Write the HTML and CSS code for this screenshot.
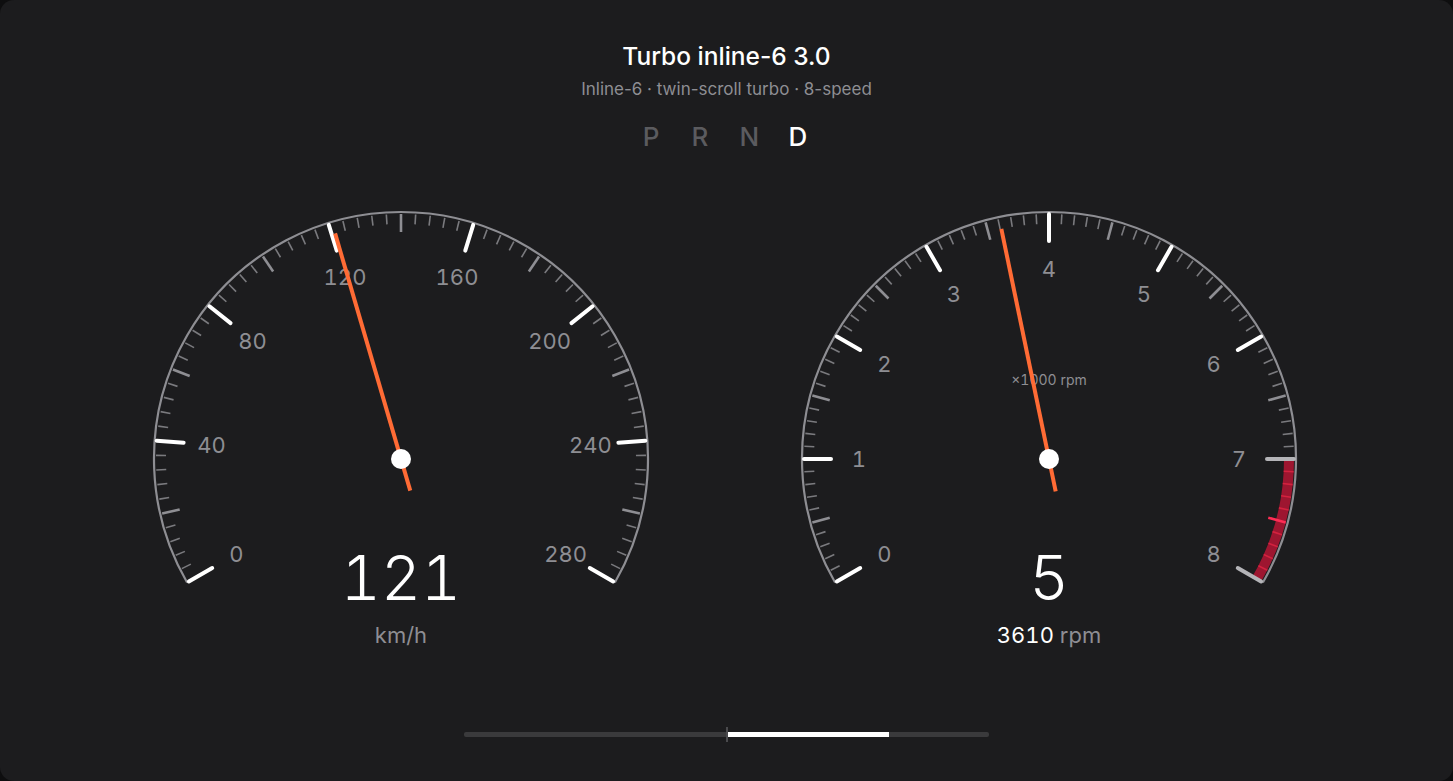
FILE: index.html
```html
<!DOCTYPE html>
<html lang="en">
<head>
<meta charset="UTF-8" />
<meta name="viewport" content="width=device-width, initial-scale=1" />
<title>Turbo inline-6 3.0</title>
<link rel="stylesheet" href="styles.css">
</head>
<body>

<div class="dash">
  <header class="head">
    <h1>Turbo inline-6 3.0</h1>
    <p class="spec">Inline-6 · twin-scroll turbo · 8-speed</p>
    <div class="prnd">
      <span>P</span><span>R</span><span>N</span><span class="on">D</span>
    </div>
  </header>

  <div class="gauges">
    <div class="gauge">
      <svg id="speedo" class="dial" width="520" height="400" viewBox="0 0 520 400"></svg>
      <div class="readout">
        <div class="big">121</div>
        <div class="unit">km/h</div>
      </div>
    </div>
    <div class="gauge">
      <svg id="tacho" class="dial" width="520" height="400" viewBox="0 0 520 400"></svg>
      <div class="readout">
        <div class="big">5</div>
        <div class="unit"><span class="val">3610</span> rpm</div>
      </div>
    </div>
  </div>

  <div class="pedal">
    <div class="track">
      <div class="fill" style="left: 50%; width: 31%"></div>
      <span class="mark"></span>
    </div>
  </div>
</div>

<script>
(() => {
  const NS = 'http://www.w3.org/2000/svg';
  const CX = 260, CY = 260, R = 247;
  const START = -120, SWEEP = 240;

  // angle in degrees, clockwise from 12 o'clock
  function pt(r, deg) {
    const a = (deg - 90) * Math.PI / 180;
    return [CX + r * Math.cos(a), CY + r * Math.sin(a)];
  }

  function el(svg, tag, attrs, text) {
    const e = document.createElementNS(NS, tag);
    for (const k in attrs) e.setAttribute(k, attrs[k]);
    if (text != null) e.textContent = text;
    svg.appendChild(e);
    return e;
  }

  function arc(r, a0, a1) {
    const [x0, y0] = pt(r, a0);
    const [x1, y1] = pt(r, a1);
    const big = (a1 - a0) > 180 ? 1 : 0;
    return `M${x0} ${y0} A${r} ${r} 0 ${big} 1 ${x1} ${y1}`;
  }

  function line(svg, r0, r1, deg, cls) {
    const [x0, y0] = pt(r0, deg);
    const [x1, y1] = pt(r1, deg);
    el(svg, 'line', { x1: x0, y1: y0, x2: x1, y2: y1, class: cls });
  }

  function dial(svg, opt) {
    const ang = v => START + (v / opt.max) * SWEEP;

    el(svg, 'path', { d: arc(R, START, START + SWEEP), class: 'rim' });

    if (opt.red != null) {
      el(svg, 'path', { d: arc(240, ang(opt.red), ang(opt.max)), class: 'redband' });
    }

    for (let i = 0; i <= opt.steps; i++) {
      const v = i * opt.max / opt.steps;
      const deg = ang(v);
      const inRed = opt.red != null && v >= opt.red - 1e-9;
      if (i % opt.major === 0) {
        line(svg, 245, 218, deg, inRed ? 'tick major dim' : 'tick major');
        const [lx, ly] = pt(190, deg);
        el(svg, 'text', { x: lx, y: ly, class: 'num' }, opt.label(v));
      } else if (i % opt.medium === 0) {
        line(svg, 245, 227, deg, inRed ? 'tick mid red' : 'tick mid');
      } else {
        line(svg, 245, 235, deg, inRed ? 'tick minor red' : 'tick minor');
      }
    }

    if (opt.caption) {
      el(svg, 'text', { x: CX, y: CY - 80, class: 'caption' }, opt.caption);
    }

    line(svg, -33, 235, ang(opt.value), 'needle');
    el(svg, 'circle', { cx: CX, cy: CY, r: 10, class: 'hub' });
  }

  dial(document.getElementById('speedo'), {
    max: 280, steps: 70, major: 10, medium: 5,
    value: 121, label: v => String(Math.round(v))
  });

  dial(document.getElementById('tacho'), {
    max: 8, steps: 80, major: 10, medium: 5,
    value: 3.61, red: 7, caption: '×1000 rpm',
    label: v => String(Math.round(v))
  });
})();
</script>

</body>
</html>
```

FILE: styles.css
```css
* {
  margin: 0; padding: 0; box-sizing: border-box;
}
html, body {
  height: 100%;
  background: #0e0e0f;
  font-family: 'Inter', 'Noto Sans', sans-serif;
  color: #fff;
  overflow: hidden;
}

/* Panel */
.dash {
  height: 100vh;
  background: #1c1c1e;
  border-radius: 14px;
  display: flex;
  flex-direction: column;
  align-items: center;
  padding: 41px 0 44px;
}

/* Header */
.head {
  text-align: center;
}
.head h1 {
  font-size: 24.5px;
  line-height: 30px;
  font-weight: 500;
}
.spec {
  margin-top: 8px;
  font-size: 17px;
  line-height: 20px;
  color: #8e8e93;
}
.prnd {
  margin-top: 22px;
  display: flex;
  justify-content: center;
  gap: 30px;
  font-size: 26px;
  line-height: 32px;
  font-weight: 500;
  color: #5b5b5f;
  padding-right: 4px;
}
.prnd span {
  width: 19px;
  text-align: center;
}
.prnd .on {
  color: #fff;
}

/* Gauges */
.gauges {
  margin-top: 46px;
  display: flex;
  gap: 128px;
  padding-right: 3px;
}
.gauge {
  display: flex;
  flex-direction: column;
  align-items: center;
  font-variant-numeric: tabular-nums;
}
.dial {
  display: block;
}
.dial .rim {
  fill: none;
  stroke: #8e8e93;
  stroke-width: 2.2;
}
.dial .redband {
  fill: none;
  stroke: #9d1630;
  stroke-width: 10;
}
.dial .tick {
  stroke-linecap: round;
}
.dial .major {
  stroke: #fff;
  stroke-width: 4;
}
.dial .major.dim {
  stroke: #b4b4b8;
}
.dial .mid {
  stroke: #8e8e93;
  stroke-width: 2.6;
  stroke-linecap: butt;
}
.dial .minor {
  stroke: #7a7a7e;
  stroke-width: 1.6;
  stroke-linecap: butt;
}
.dial .mid.red {
  stroke: #ff2d55;
}
.dial .minor.red {
  stroke: #d3223f;
}
.dial .num {
  fill: #8e8e93;
  font-size: 22px;
  text-anchor: middle;
  dominant-baseline: central;
}
.dial .caption {
  fill: #8e8e93;
  font-size: 14px;
  text-anchor: middle;
  dominant-baseline: central;
}
.dial .needle {
  stroke: #ff6b35;
  stroke-width: 4;
}
.dial .hub {
  fill: #fff;
}

/* Digital readout under each dial */
.readout {
  margin-top: -52px;
  text-align: center;
}
.big {
  font-size: 62px;
  line-height: 61px;
  font-weight: 300;
}
.unit {
  margin-top: 14px;
  font-size: 22px;
  line-height: 26px;
  color: #8e8e93;
}
.unit .val {
  color: #fff;
}

/* Pedal bar */
.pedal {
  margin-top: auto;
}
.track {
  position: relative;
  width: 525px;
  height: 5px;
  background: #3a3a3c;
  border-radius: 2px;
}
.fill {
  position: absolute;
  top: 0; bottom: 0;
  background: #fff;
}
.mark {
  position: absolute;
  left: 50%;
  top: -5px;
  width: 2px;
  height: 15px;
  margin-left: -1px;
  background: #4a4a4d;
}
```
